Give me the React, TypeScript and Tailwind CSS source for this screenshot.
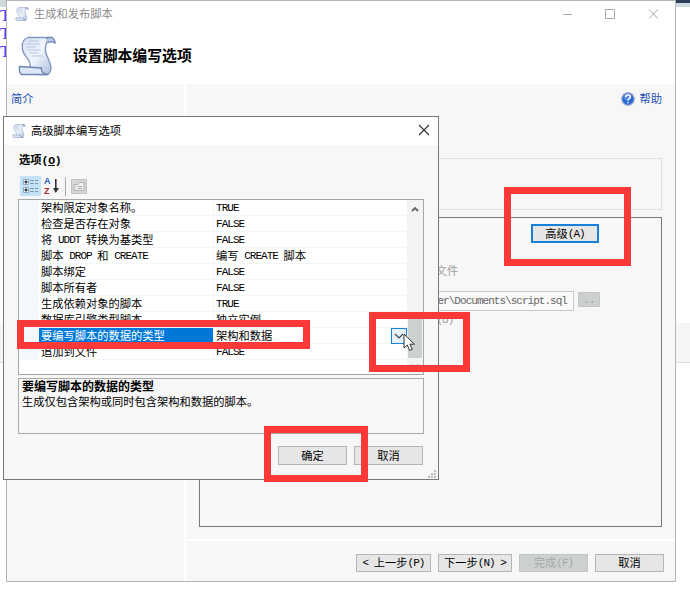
import React from "react";

/* Splits a label into CJK and Latin runs; Latin glyphs occupy exactly half a CJK cell. */
function Label({ text, className = "" }: { text: string; className?: string }) {
  const runs = text.match(/[\x20-\x7e]+|[^\x20-\x7e]+/g) ?? [];
  return (
    <span className={`whitespace-pre ${className}`}>
      {runs.map((run, i) =>
        /^[\x20-\x7e]/.test(run) ? (
          <span key={i} className="align-[1px] font-['Liberation_Mono',monospace] text-[11px] leading-[10px] tracking-[-0.97px]">
            {run}
          </span>
        ) : (
          <span key={i}>{run}</span>
        )
      )}
    </span>
  );
}

function ScrollIcon({ className }: { className: string }) {
  return (
    <svg viewBox="0 0 38 40" className={className}>
      <defs>
        <linearGradient id="paper" x1="0" y1="0" x2="1" y2="1">
          <stop offset="0" stopColor="#d3e0f2" />
          <stop offset="0.5" stopColor="#f1f6fc" />
          <stop offset="1" stopColor="#a9bedd" />
        </linearGradient>
      </defs>
      <path
        d="M10 1.500H33C27 5 26 14 29 20c4 8 6 14 1 18.500H20L12 31c2-7-6-10-7.500-17C3.500 8 5 3 10 1.500Z"
        fill="url(#paper)"
        stroke="#8095bd"
        strokeWidth="1.300"
      />
      <path d="M1.500 30.500l22 1.500c-.500 4 1.500 6 6.500 6.500H3.500C1.500 37 1 34 1.500 30.500Z" fill="#dde8f6" stroke="#6f86b2" strokeWidth="1.400" />
      <path d="M28 2.500c4-2 9-1.500 9 4.500-2-1.500-5-1.500-8.500 0" fill="#b7c9e5" stroke="#6f86b2" strokeWidth="1.300" />
      <path d="M11 5h10M9 8h13M9 11h9M10 14h13M12 17h9M14 20h11" stroke="#b5c3da" strokeWidth="1" />
    </svg>
  );
}

function Button({ text, className = "", disabled = false }: { text: string; className?: string; disabled?: boolean }) {
  return (
    <div
      className={`flex shrink-0 items-center justify-center border ${
        disabled ? "border-[#c1c5c3] bg-[#ccd1cf] text-[#a4a8a6]" : "border-[#b4b6b6] bg-[#e6e6e6]"
      } ${className}`}
    >
      <Label text={text} />
    </div>
  );
}

const rows: [string, string][] = [
  ["架构限定对象名称。", "TRUE"],
  ["检查是否存在对象", "FALSE"],
  ["将 UDDT 转换为基类型", "FALSE"],
  ["脚本 DROP 和 CREATE", "编写 CREATE 脚本"],
  ["脚本绑定", "FALSE"],
  ["脚本所有者", "FALSE"],
  ["生成依赖对象的脚本", "TRUE"],
  ["数据库引擎类型脚本", "独立实例"],
  ["要编写脚本的数据的类型", "架构和数据"],
  ["追加到文件", "FALSE"],
];

function WizardWindow() {
  return (
    <div className="absolute left-[6px] top-0 flex h-[582px] w-[670px] flex-col border border-[#b3b6b8] bg-[#f7f7f7]">
      <div className="flex h-[26px] shrink-0 items-center bg-white pl-[8px] text-[#8c8c8c]">
        <ScrollIcon className="h-[14px] w-[14px]" />
        <Label text="生成和发布脚本" className="ml-[5px] grow" />
        <svg width="100" height="12" viewBox="0 0 100 12" className="mr-[14px] shrink-0" fill="none" stroke="#a8a8a8">
          <path d="M2 6.500h9" />
          <path d="M44.500 1.500h9v9h-9z" />
          <path d="M88 1.500l9 9M97 1.500l-9 9" />
        </svg>
      </div>
      <div className="flex h-[57px] shrink-0 items-start bg-white pl-[11px] pt-[9px]">
        <ScrollIcon className="h-[40px] w-[38px]" />
        <span className="ml-[17px] mt-[10px] text-[14.85px] font-bold leading-[20px] text-black">设置脚本编写选项</span>
      </div>
      <div className="flex min-h-0 grow">
        <div className="w-[177px] shrink-0 pl-[4px] pt-[7px] text-[#1c50b4]">简介</div>
        <div className="w-[2px] shrink-0 bg-white" />
        <div className="flex grow flex-col">
          <div className="flex h-[74px] shrink-0 items-start justify-end pr-[13px] pt-[7px] text-[#1c50b4]">
            <svg width="14" height="14" viewBox="0 0 14 14" className="mr-[4px] mt-px">
              <circle cx="7" cy="7" r="6.300" fill="#2c66d6" stroke="#a6b3c8" strokeWidth="1.200" />
              <circle cx="6" cy="5" r="3.500" fill="#6c9cec" opacity="0.6" />
              <path d="M4.800 5.200c0-3 4.600-2.800 4.600-.2C9.400 6.700 7.200 6.600 7 8.500M7 9.800v1.400" fill="none" stroke="white" strokeWidth="1.500" />
            </svg>
            帮助
          </div>
          <div className="ml-[13px] h-[52px] w-[463px] shrink-0 border border-[#e1e1e1]" />
          <div className="ml-[13px] mt-[7px] flex h-[310px] w-[463px] shrink-0 flex-col border border-[#777] text-[#a0a0a0]">
            <div className="ml-[331px] mt-[6px] flex h-[19px] w-[68px] shrink-0 items-center justify-center border-2 border-[#1480d8] bg-[#e6e6e6] text-black">
              <Label text="高级(A)" />
            </div>
            <div className="ml-[202px] mt-[20px] h-[16px] leading-[16px]">保存到文件</div>
            <div className="mt-[12px] flex items-start">
              <div className="ml-[134px] flex h-[20px] w-[240px] items-center justify-end border border-[#c8caca] bg-[#fafafa] pr-[6px] text-[#666]">
                <Label text="C:\Users\User\Documents\script.sql" />
              </div>
              <div className="ml-[4px] mt-px flex h-[15px] w-[22px] items-center justify-center border border-[#c3c7c5] bg-[#ccd1cf] text-[#999]">
                <Label text=".." />
              </div>
            </div>
            <div className="ml-[197px] mt-px h-[16px] leading-[16px]">
              <Label text="Unicode(U)" />
            </div>
          </div>
          <div className="mt-[12px] h-[2px] shrink-0 bg-white" />
          <div className="flex justify-end pr-[11px] pt-[13px] text-black">
            <Button text="< 上一步(P)" className="h-[18px] w-[75px]" />
            <Button text="下一步(N) >" className="ml-[7px] h-[18px] w-[74px]" />
            <Button text="完成(F)" disabled className="ml-[7px] h-[18px] w-[69px]" />
            <Button text="取消" className="ml-[7px] h-[18px] w-[69px]" />
          </div>
        </div>
      </div>
    </div>
  );
}

function PropertyGrid() {
  return (
    <div className="ml-[14px] flex h-[176px] w-[406px] shrink-0 border border-[#a5a7a7] bg-white">
      <div className="w-[388px] shrink-0">
        {rows.map(([name, value], i) => (
          <div key={name} className="flex h-[16px] leading-[17px]">
            <div className="w-[20px] shrink-0 bg-[#f5f9fe]" />
            <div
              className={`w-[174px] shrink-0 border-b pl-[2px] ${
                i === 8 ? "border-white bg-[#0078d7] text-white" : "border-[#f3f6fb]"
              }`}
            >
              <Label text={name} />
            </div>
            <div className="flex grow border-b border-l border-[#f3f6fb] pl-[2px]">
              <Label text={value} className="grow" />
              {i === 8 && (
                <div className="flex h-[16px] w-[16px] shrink-0 items-center justify-center border border-[#1883d7] bg-[#e5f1fb]">
                  <svg width="10" height="6" viewBox="0 0 10 6" fill="none" stroke="#444" strokeWidth="1.200">
                    <path d="M1 1l4 4 4-4" />
                  </svg>
                </div>
              )}
            </div>
          </div>
        ))}
      </div>
      <div className="flex grow flex-col items-center bg-[#f3f3f3]">
        <svg width="8" height="6" viewBox="0 0 8 6" fill="none" stroke="#666" strokeWidth="1.800" className="mt-[6px] shrink-0">
          <path d="M1 5l3-3 3 3" />
        </svg>
        <div className="mt-[106px] h-[40px] w-[14px] shrink-0 bg-[#ccd1cf]" />
        <svg width="8" height="5" viewBox="0 0 8 5" fill="none" stroke="#aaa" className="mt-[5px] shrink-0">
          <path d="M1 1l3 3 3-3" />
        </svg>
      </div>
    </div>
  );
}

function AdvancedDialog() {
  return (
    <div className="absolute left-[3px] top-[116px] flex h-[364px] w-[436px] flex-col border border-[#777] bg-[#f7f7f7] text-black">
      <div className="flex h-[28px] shrink-0 items-center bg-white pl-[8px]">
        <ScrollIcon className="mb-px h-[14px] w-[14px]" />
        <Label text="高级脚本编写选项" className="mb-px ml-[5px] grow" />
        <svg width="12" height="12" viewBox="0 0 12 12" className="mb-[2px] mr-[8px] shrink-0" stroke="#333" strokeWidth="1.100">
          <path d="M1 1l10 10M11 1L1 11" />
        </svg>
      </div>
      <div className="ml-[15px] mt-[7px] h-[17px] shrink-0 font-bold leading-[17px]">
        选项
        <span className="font-['Liberation_Mono',monospace] text-[11.5px] tracking-[-0.3px]">
          (<span className="underline">O</span>)
        </span>
      </div>
      <div className="ml-[16px] mt-[7px] flex h-[22px] shrink-0 items-start">
        <div className="flex h-[20px] w-[21px] items-center justify-center bg-[#c4e2f7]">
          <svg width="17" height="16" viewBox="0 0 17 16" fill="none">
            <path d="M1.500 1.500h5v5h-5zM1.500 9.500h5v5h-5z" fill="white" stroke="#96a6b8" />
            <path d="M2.500 4h3M4 2.500v3M2.500 12h3M4 10.500v3" stroke="#17314f" strokeWidth="1.500" />
            <path d="M8 2.500h4M8 5.500h4M8 10.500h4M8 13.500h4M13 2.500h3M13 5.500h3M13 10.500h3M13 13.500h3" stroke="#8094aa" />
          </svg>
        </div>
        <div className="ml-[3px] flex w-[7px] flex-col font-['Liberation_Sans',sans-serif] text-[9px] font-bold leading-[10px]">
          <span className="text-[#2463b5]">A</span>
          <span className="text-[#a72834]">Z</span>
        </div>
        <svg width="6" height="16" viewBox="0 0 6 16" className="ml-[2px] mt-[2px]">
          <path d="M2 1h1.600v9H6l-3.200 5L0 10h2z" fill="#333" />
        </svg>
        <div className="ml-[6px] mt-px h-[19px] w-px bg-[#aaa]" />
        <svg width="16" height="15" viewBox="0 0 16 15" fill="none" className="ml-[5px] mt-[3px]">
          <path d="M.500.500h15v14H.500z" fill="#d6d6d6" stroke="#c2c2c2" />
          <path d="M3 5.500h4l1-2h5v8H3z" fill="#f0f0f0" stroke="#b2b2b2" />
          <path d="M4.500 7.500h1M4.500 9.500h1M7 7.500h4M7 9.500h4" stroke="#aaa" />
        </svg>
      </div>
      <div className="h-px shrink-0" />
      <PropertyGrid />
      <div className="ml-[14px] mt-[3px] h-[56px] w-[406px] shrink-0 border border-[#a9abab] pl-[3px] pt-px leading-[15px]">
        <div className="text-[12px] font-bold">要编写脚本的数据的类型</div>
        <div>生成仅包含架构或同时包含架构和数据的脚本。</div>
      </div>
      <div className="mt-[12px] flex justify-end pr-[15px]">
        <Button text="确定" className="h-[19px] w-[69px]" />
        <Button text="取消" className="ml-[7px] h-[19px] w-[69px]" />
      </div>
      <svg width="8" height="8" viewBox="0 0 8 8" fill="#bdbdbd" className="ml-auto mr-[2px] mt-[5px]">
        <path d="M6 0h2v2H6zM3 3h2v2H3zM6 3h2v2H6zM0 6h2v2H0zM3 6h2v2H3zM6 6h2v2H6z" />
      </svg>
    </div>
  );
}

export default function App() {
  return (
    <div className="relative h-[604px] w-[690px] overflow-hidden bg-white font-['Liberation_Sans','Noto_Sans_CJK_SC',sans-serif] text-[11.25px] leading-[16px]">
      <div className="flex h-[7px] justify-between">
        <div className="w-[6px] bg-[#cdd8dc]" />
        <div className="w-[14px] border-t-[3px] border-[#2b3d58] bg-[#cddadd]" />
      </div>
      <div className="flex h-[53px] flex-col font-['Liberation_Serif',serif] text-[17px] leading-[18px] text-[#4444f4]">
        <span>T</span>
        <span>T</span>
        <span>T</span>
      </div>
      <div className="mt-[263px] h-[40px] border-b border-[#dedede] bg-[#f5f5f5]" />

      <WizardWindow />
      <AdvancedDialog />

      <div className="absolute left-[504px] top-[187px] h-[79px] w-[127px] border-[7px] border-[#fd3838]" />
      <div className="absolute left-[17px] top-[320px] h-[29px] w-[293px] border-[7px] border-[#fd3838]" />
      <div className="absolute left-[369px] top-[312px] h-[60px] w-[101px] border-[7px] border-[#fd3838]" />
      <div className="absolute left-[264px] top-[426px] h-[56px] w-[104px] border-[7px] border-[#fd3838]" />
      <svg width="14" height="19" viewBox="0 0 14 19" className="absolute left-[403px] top-[333px]">
        <path d="M1 1v14l3.300-3 2.300 5.500 2.600-1.100-2.300-5.200h4.600z" fill="white" stroke="#333" />
      </svg>
    </div>
  );
}
